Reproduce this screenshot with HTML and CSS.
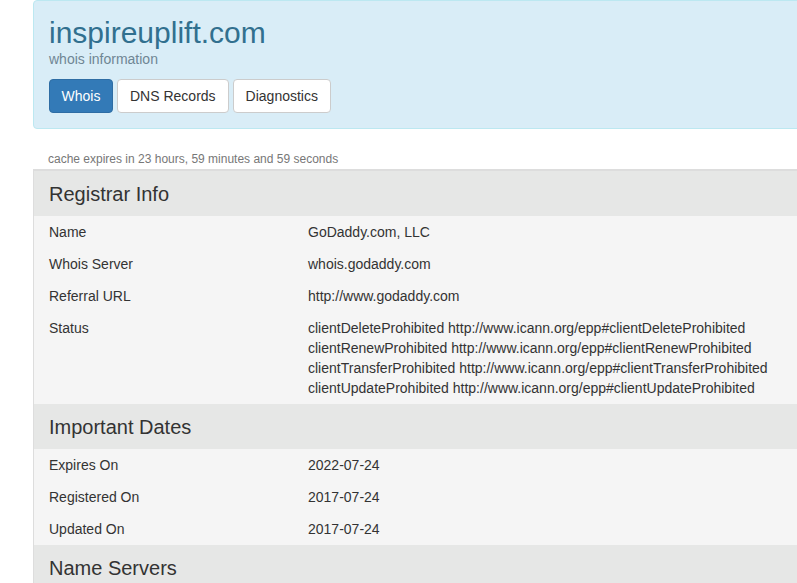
FILE: index.html
```html
<!DOCTYPE html>
<html>
<head>
    <title>inspireuplift.com - whois information</title>
    <link rel="stylesheet" href="styles.css">
</head>
<body>
    <div class="page">
        <div class="jumbo">
            <h1>inspireuplift.com</h1>
            <div class="sub">whois information</div>
            <div class="tabs">
                <a class="btn btn-primary btn-whois">Whois</a>
                <a class="btn">DNS Records</a>
                <a class="btn">Diagnostics</a>
            </div>
        </div>

        <div class="cache">cache expires in 23 hours, 59 minutes and 59 seconds</div>

        <div class="info">
            <div class="section-title">Registrar Info</div>
            <div class="row">
                <div class="label">Name</div>
                <div class="value">GoDaddy.com, LLC</div>
            </div>
            <div class="row">
                <div class="label">Whois Server</div>
                <div class="value">whois.godaddy.com</div>
            </div>
            <div class="row">
                <div class="label">Referral URL</div>
                <div class="value">http://www.godaddy.com</div>
            </div>
            <div class="row">
                <div class="label">Status</div>
                <div class="value">
                    clientDeleteProhibited http://www.icann.org/epp#clientDeleteProhibited<br>
                    clientRenewProhibited http://www.icann.org/epp#clientRenewProhibited<br>
                    clientTransferProhibited http://www.icann.org/epp#clientTransferProhibited<br>
                    clientUpdateProhibited http://www.icann.org/epp#clientUpdateProhibited
                </div>
            </div>

            <div class="section-title">Important Dates</div>
            <div class="row">
                <div class="label">Expires On</div>
                <div class="value">2022-07-24</div>
            </div>
            <div class="row">
                <div class="label">Registered On</div>
                <div class="value">2017-07-24</div>
            </div>
            <div class="row">
                <div class="label">Updated On</div>
                <div class="value">2017-07-24</div>
            </div>

            <div class="section-title">Name Servers</div>
        </div>
    </div>
</body>
</html>
```

FILE: styles.css
```css
* {
    margin: 0;
    padding: 0;
    box-sizing: border-box;
}

body {
    font-family: "Liberation Sans", Arial, sans-serif;
    font-size: 14px;
    line-height: 20px;
    color: #333;
    background: #fff;
    overflow: hidden;
}

.page {
    margin-left: 33px;
    width: 900px;
}

.jumbo {
    background-color: #d9edf7;
    border: 1px solid #bce8f1;
    border-radius: 4px;
    padding: 15px;
    color: #31708f;
    height: 129px;
}

.jumbo h1 {
    font-size: 30px;
    font-weight: normal;
    line-height: 33px;
}

.sub {
    color: #6f8694;
    font-size: 14px;
    line-height: 20px;
}

.tabs {
    margin-top: 10px;
    display: flex;
    gap: 4px;
}

.btn {
    display: inline-block;
    height: 34px;
    padding: 6px 12px;
    font-size: 14px;
    line-height: 20px;
    color: #333;
    background: #fff;
    border: 1px solid #ccc;
    border-radius: 4px;
    cursor: pointer;
}

.btn-primary {
    color: #fff;
    background: #337ab7;
    border-color: #2e6da4;
}

.btn-whois {
    width: 64px;
    text-align: center;
    padding: 6px 0;
}

.cache {
    margin-top: 21px;
    padding-left: 15px;
    font-size: 12px;
    line-height: 19px;
    color: #777;
}

.info {
    border-top: 2px solid #ddd;
    border-left: 1px solid #ddd;
    background: #f5f5f5;
}

.section-title {
    background: #e6e7e6;
    font-size: 20px;
    line-height: 22px;
    padding: 12px 15px 11px;
    height: 45px;
}

.row {
    display: grid;
    grid-template-columns: 259px 1fr;
    padding: 6px 0;
}

.label,
.value {
    padding-left: 15px;
}
```
